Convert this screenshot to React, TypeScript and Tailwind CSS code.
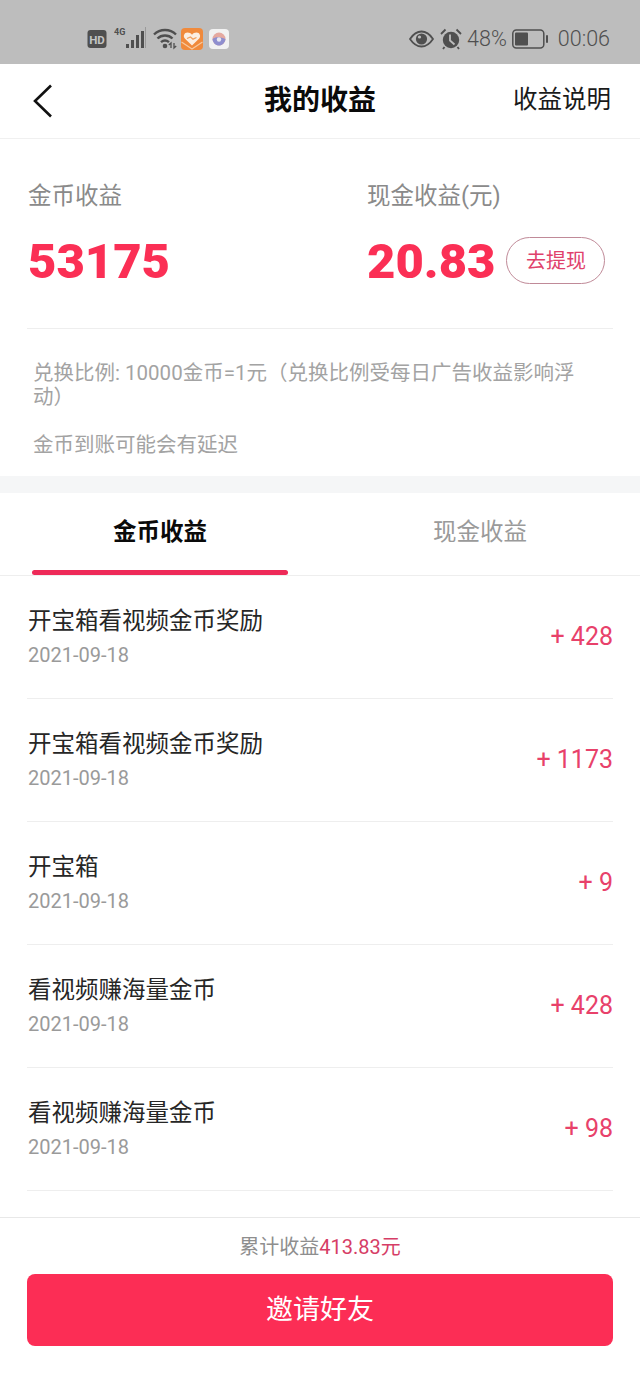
const FONT = "font-['Roboto','Noto_Sans_CJK_SC',sans-serif]";

const rows = [
  { title: "开宝箱看视频金币奖励", amount: "+ 428" },
  { title: "开宝箱看视频金币奖励", amount: "+ 1173" },
  { title: "开宝箱", amount: "+ 9" },
  { title: "看视频赚海量金币", amount: "+ 428" },
  { title: "看视频赚海量金币", amount: "+ 98" },
];

function StatusLeft() {
  return (
    <div className="flex items-center">
      <svg width="20" height="20" viewBox="0 0 20 20" className="mr-[7px]">
        <rect x="0.5" y="1" width="19" height="18" rx="3" fill="#4f4f4f" />
        <text x="10" y="14.5" textAnchor="middle" fontSize="11.5" fontWeight="700" fill="#c4c4c4" fontFamily="Roboto">HD</text>
      </svg>
      <svg width="33" height="24" viewBox="0 0 33 24" className="mr-[6px]">
        <text x="0" y="8" fontSize="9" fontWeight="700" fill="#4f4f4f" fontFamily="Roboto">4G</text>
        <rect x="12" y="17" width="3" height="4" fill="#4f4f4f" />
        <rect x="17" y="13" width="3" height="8" fill="#4f4f4f" />
        <rect x="22" y="8" width="3" height="13" fill="#4f4f4f" />
        <rect x="27" y="4" width="3" height="17" fill="#4f4f4f" />
        <rect x="31" y="0" width="1" height="21" fill="#9a9a9a" />
      </svg>
      <svg width="26" height="24" viewBox="0 0 26 24" className="mr-[2px]" fill="none">
        <path d="M1 7.5C7 1.5 17 1.5 23 7.5" stroke="#4f4f4f" strokeWidth="2.4" />
        <path d="M4.5 11.5C8.5 7.5 15.5 7.5 19.5 11.5" stroke="#4f4f4f" strokeWidth="2.4" />
        <path d="M8 15.2C10.5 13 13.5 13 16 15.2" stroke="#4f4f4f" strokeWidth="2.4" />
        <circle cx="12" cy="19" r="2.3" fill="#4f4f4f" />
        <path d="M18 21V16L15.8 18M21 16V21L23.2 19" stroke="#4f4f4f" strokeWidth="1.3" />
      </svg>
      <svg width="22" height="22" viewBox="0 0 22 22" className="mr-[6px]">
        <rect width="22" height="22" rx="4" fill="#f08a3c" />
        <path d="M11 17.5L3.8 10.5C1.8 8.2 3.2 4.5 6.5 4.5C8.3 4.5 10 5.4 11 6.8C12 5.4 13.7 4.5 15.5 4.5C18.8 4.5 20.2 8.2 18.2 10.5Z" fill="#fbeee2" />
        <path d="M6 10.5L9.5 9L12 11.2L15.5 9.5" fill="none" stroke="#f0a060" strokeWidth="1.3" />
        <path d="M0.5 14L11 21L21.5 14" fill="none" stroke="#f7c9a0" strokeWidth="1.2" />
      </svg>
      <svg width="20" height="20" viewBox="0 0 20 20">
        <rect width="20" height="20" rx="4" fill="#f2f2f2" />
        <circle cx="10" cy="10" r="6.5" fill="#e5a9a0" />
        <path d="M3.5 10C6 7.5 12 8 16.5 10C16 14 13 16.5 10 16.5C6.5 16.5 4 14 3.5 10Z" fill="#8f8fcf" />
        <circle cx="10" cy="10.5" r="2.2" fill="#e9e9f2" />
      </svg>
    </div>
  );
}

function StatusRight() {
  return (
    <div className="flex items-center text-[#4f4f4f]">
      <svg width="25" height="18" viewBox="0 0 25 18" className="mr-[6px]" fill="none">
        <path d="M1 9C5 3 9 1.5 12.5 1.5C16 1.5 20 3 24 9C20 15 16 16.5 12.5 16.5C9 16.5 5 15 1 9Z" stroke="#4f4f4f" strokeWidth="1.8" />
        <circle cx="12.5" cy="9" r="5.6" fill="#4f4f4f" />
        <circle cx="10.5" cy="7" r="1.6" fill="#bdbdbd" />
      </svg>
      <svg width="22" height="22" viewBox="0 0 22 22" className="mr-[5px]" fill="none">
        <circle cx="11" cy="12" r="8.2" fill="#4f4f4f" />
        <path d="M1 6L5.5 1.5M21 6L16.5 1.5" stroke="#4f4f4f" strokeWidth="1.8" />
        <path d="M4.5 19L3 21M17.5 19L19 21" stroke="#4f4f4f" strokeWidth="1.8" />
        <path d="M10 6.5V12.5L14.5 16.5" stroke="#bdbdbd" strokeWidth="1.8" />
      </svg>
      <span className="text-[21.5px] leading-none font-['Roboto'] font-light mr-[5px]">48%</span>
      <svg width="36" height="20" viewBox="0 0 36 20" className="mr-[10px]" fill="none">
        <rect x="0.8" y="1" width="31" height="18" rx="3.5" stroke="#4f4f4f" strokeWidth="1.5" />
        <rect x="3" y="3.5" width="13" height="13" rx="1" fill="#4f4f4f" />
        <rect x="34" y="6" width="2" height="8" rx="1" fill="#4f4f4f" />
      </svg>
      <span className="text-[21.5px] leading-none font-['Roboto'] font-light">00:06</span>
    </div>
  );
}

export default function App() {
  return (
    <div className={`${FONT} w-[640px] h-[1387px] bg-white flex flex-col overflow-hidden`}>
      <div className="h-16 shrink-0 bg-[#bdbdbd] flex items-center justify-between pt-[14px] pl-[87px] pr-[30px]">
        <StatusLeft />
        <StatusRight />
      </div>

      <header className="h-[75px] shrink-0 border-b border-[#f0f0f0] flex items-center justify-between pl-[33px] pr-[29px] relative">
        <svg width="20" height="34" viewBox="0 0 20 34" fill="none">
          <path d="M18 1.5L2 17L18 32.5" stroke="#111" strokeWidth="2.6" />
        </svg>
        <h1 className="absolute left-0 right-0 top-[17px] text-center text-[28px] leading-[40px] font-bold text-[#0a0a0a]">我的收益</h1>
        <span className="text-[24.5px] leading-[36px] text-[#1a1a1a] mb-[3px]">收益说明</span>
      </header>

      <section className="h-[337px] shrink-0 px-[27px] flex flex-col">
        <div className="flex pt-[40px] h-[190px] border-b border-[#eeeeee] shrink-0">
          <div className="w-[340px] pl-px">
            <div className="text-[23.5px] leading-[34px] text-[#8a8a8a]">金币收益</div>
            <div className="mt-[22px] text-[49px] leading-[54px] font-black text-[#fb2f55] font-['Roboto']">53175</div>
          </div>
          <div className="flex-1">
            <div className="text-[23.5px] leading-[34px] text-[#8a8a8a]">现金收益(元)</div>
            <div className="mt-[22px] flex items-center">
              <span className="text-[49px] leading-[54px] font-black text-[#fb2f55] font-['Roboto']">20.83</span>
              <span className="ml-[11px] w-[99px] h-[47px] rounded-full border border-[#c08a98] flex items-center justify-center text-[20px] text-[#e0416b] mb-[3px]">去提现</span>
            </div>
          </div>
        </div>
        <div className="pl-[6px] pr-[30px] pt-[32px] text-[20.5px] leading-[24px] text-[#a3a3a3]">
          <p>兑换比例: 10000金币=1元（兑换比例受每日广告收益影响浮动）</p>
          <p className="mt-[24px]">金币到账可能会有延迟</p>
        </div>
      </section>

      <div className="h-[17px] shrink-0 bg-[#f5f6f7]" />

      <nav className="h-[83px] shrink-0 border-b border-[#eeeeee] flex">
        <div className="w-[320px] pb-[3px] flex items-center justify-center relative text-[23.5px] font-bold text-[#0a0a0a]">
          金币收益
          <div className="absolute left-[32px] bottom-0 w-[256px] h-[5px] rounded-full bg-[#ee2a58]" />
        </div>
        <div className="w-[320px] pb-[3px] flex items-center justify-center text-[23.5px] text-[#9a9a9a]">现金收益</div>
      </nav>

      <ul className="px-[27px] h-[615px] shrink-0">
        {rows.map((r, i) => (
          <li key={i} className="h-[123px] border-b border-[#eeeeee] flex items-center justify-between">
            <div className="pl-px pb-[3px]">
              <div className="text-[23.5px] leading-[34px] text-[#262626]">{r.title}</div>
              <div className="mt-[4px] text-[20px] leading-[26px] text-[#9a9a9a]">2021-09-18</div>
            </div>
            <div className="text-[25px] text-[#e8416a] pb-[1px]">{r.amount}</div>
          </li>
        ))}
      </ul>

      <div className="h-[26px] shrink-0" />

      <footer className="border-t border-[#e8e8e8] px-[27px] flex flex-col">
        <div className="h-[56px] pt-[2px] flex items-center justify-center text-[20px] text-[#8e8e8e]">
          累计收益<span className="text-[#d63d66]">413.83元</span>
        </div>
        <button className="h-[72px] rounded-[8px] bg-[#fc2d55] text-white text-[27px] flex items-center justify-center">邀请好友</button>
      </footer>
    </div>
  );
}
